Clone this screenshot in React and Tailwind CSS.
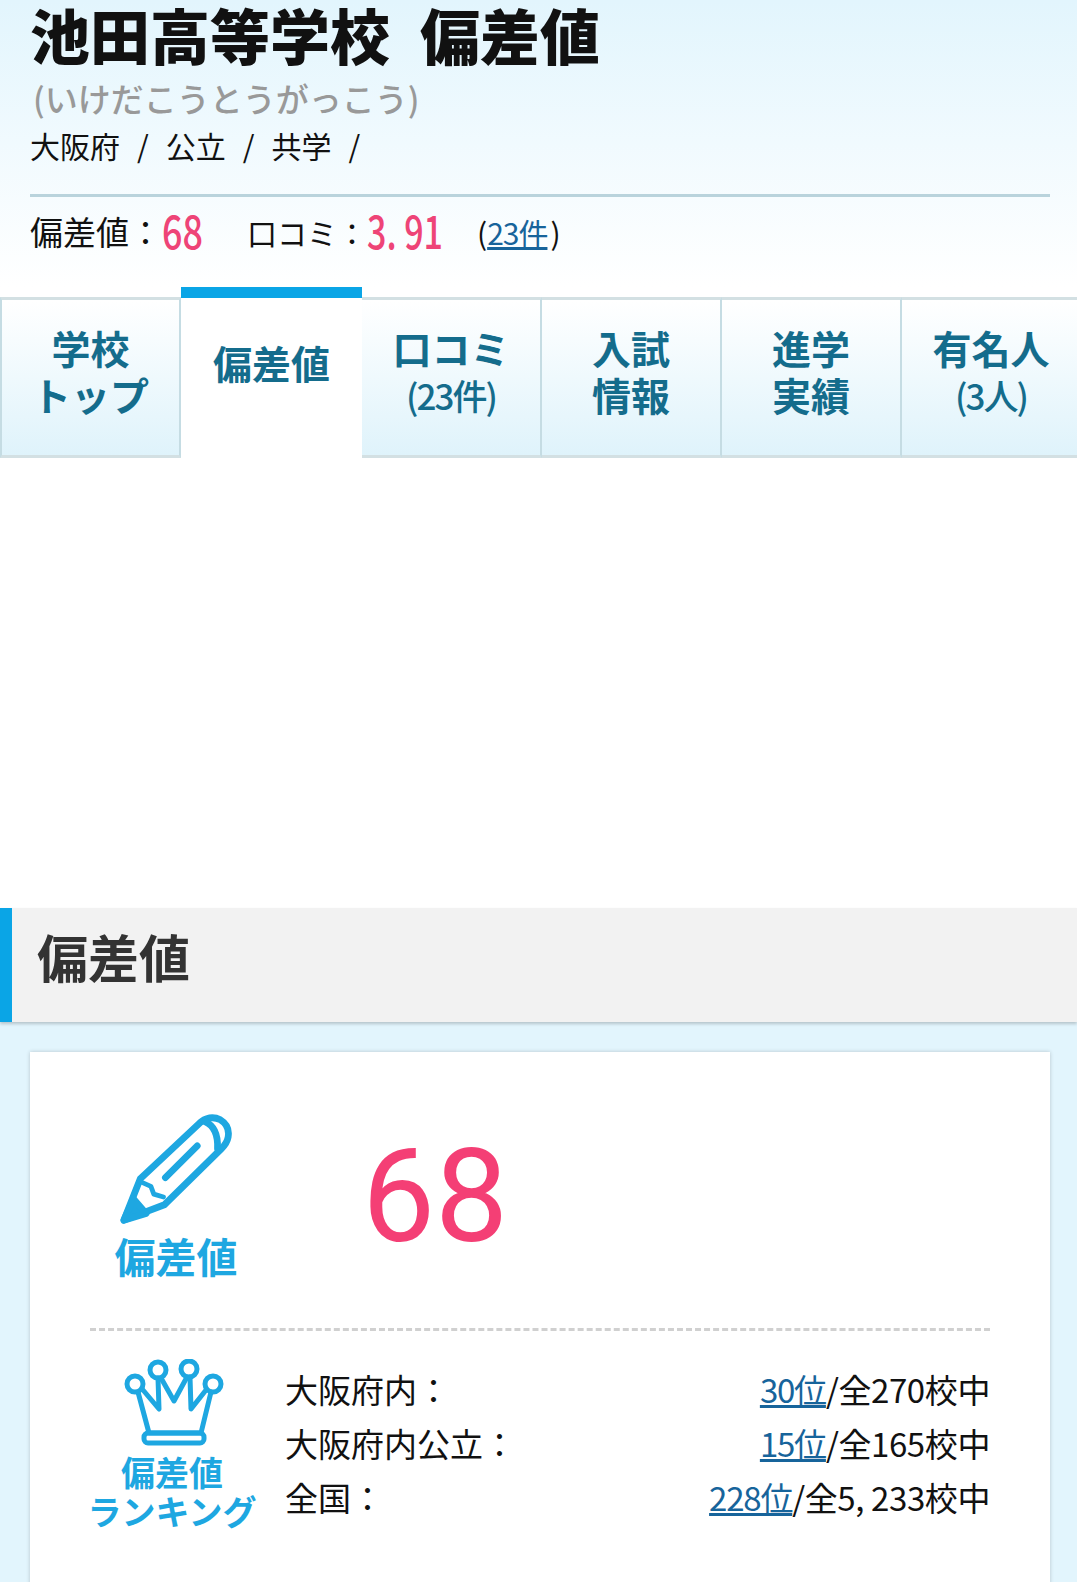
const TABS = [
  { lines: ["学校", "トップ"], w: "w-[181px] border-l-2 border-l-[#c5dce3]" },
  { lines: ["偏差値"], w: "w-[181px]", active: true },
  { lines: ["口コミ"], sub: "(23件)", w: "w-[180px]" },
  { lines: ["入試", "情報"], w: "w-[180px]" },
  { lines: ["進学", "実績"], w: "w-[180px]" },
  { lines: ["有名人"], sub: "(3人)", w: "w-[180px]" },
];

const RANKS = [
  { label: "大阪府内：", rank: "30位", total: "/全270校中" },
  { label: "大阪府内公立：", rank: "15位", total: "/全165校中" },
  { label: "全国：", rank: "228位", total: "/全5, 233校中" },
];

function Tab({ tab }) {
  if (tab.active) {
    return (
      <div className={`${tab.w} flex h-[171px] shrink-0 flex-col items-center border-t-[11px] border-[#0aa5e6] bg-white pt-[40px] text-[39px] leading-[48px] font-bold text-[#146c8c]`}>
        {tab.lines[0]}
      </div>
    );
  }
  return (
    <div className={`${tab.w} mt-[10px] flex h-[161px] shrink-0 flex-col items-center border-y-[3px] border-r-2 border-y-[#d3e0e3] border-r-[#c5dce3] bg-linear-to-b from-white to-[#dff3fb] pt-[24px] text-[39px] leading-[47px] font-bold text-[#146c8c]`}>
      {tab.lines.map((l) => (
        <div key={l}>{l}</div>
      ))}
      {tab.sub && <div className="text-[35px] font-medium tracking-[-2px]">{tab.sub}</div>}
    </div>
  );
}

function PencilIcon() {
  return (
    <svg width="112" height="112" viewBox="58 22 116 116" fill="none" stroke="#1ea7e1" strokeWidth="7" strokeLinejoin="round" strokeLinecap="round">
      <path d="M79 89 L142 30 Q152 23 162 28 Q172 34 170 46 Q169 52 163 58 L104 116 L62 132 Z" />
      <path d="M146 30 Q160 36 159 58" />
      <path d="M105 88 L138 55" />
      <path d="M79 92 L90 97 L93 105 L103 108" strokeWidth="5" />
      <path d="M62 132 L72 110 L85 125 Z" fill="#1ea7e1" />
    </svg>
  );
}

function CrownIcon() {
  return (
    <svg width="104" height="90" viewBox="64 20 104 90" fill="none" stroke="#1ea7e1" strokeWidth="5" strokeLinejoin="round" strokeLinecap="round">
      <circle cx="76" cy="45" r="8" />
      <circle cx="99" cy="31" r="8" />
      <circle cx="130" cy="30" r="8" />
      <circle cx="154" cy="45" r="8" />
      <path d="M79 53 L90 94 H142 L152 53" />
      <path d="M84 51 L100 70 L99 39" />
      <path d="M102 39 L115 62 L128 38" />
      <path d="M131 38 L132 70 L147 51" />
      <rect x="85" y="94" width="60" height="10" rx="4" />
    </svg>
  );
}

export default function App() {
  return (
    <div className="h-[1582px] w-[1077px] overflow-hidden bg-white font-['Noto_Sans_CJK_JP',sans-serif] text-[#111]">
      {/* School header */}
      <header className="h-[287px] bg-linear-to-b from-[#e2f5fd] to-white pr-[27px] pl-[30px]">
        <h1 className="flex h-[78px] gap-[30px] text-[60px] leading-[68px] font-black">
          <span>池田高等学校</span>
          <span>偏差値</span>
        </h1>
        <p className="ml-[3px] h-[44px] text-[33px] leading-[40px] font-medium text-[#999]">(いけだこうとうがっこう)</p>
        <p className="flex h-[52px] gap-[17px] text-[30px] leading-[46px]">
          <span>大阪府</span>
          <span>/</span>
          <span>公立</span>
          <span>/</span>
          <span>共学</span>
          <span>/</span>
        </p>
        <div className="mt-[20px] h-[3px] bg-[#b9d3dc]" />
        <div className="mt-[7px] flex h-[56px] items-center text-[33px]">
          <span>偏差値：</span>
          <span className="inline-block w-[41px] origin-left scale-x-[0.78] pb-[5px] text-[46px] font-medium text-[#ee4477]">68</span>
          <span className="ml-[44px] text-[30px]">口コミ：</span>
          <span className="inline-block w-[75px] origin-left scale-x-[0.74] pb-[5px] text-[46px] font-medium whitespace-nowrap text-[#ee4477]">3. 91</span>
          <span className="ml-[35px] text-[30px]">(</span>
          <a className="text-[30px] tracking-[-1px] text-[#17649b] underline">23件</a>
          <span className="ml-[3px] text-[30px]">)</span>
        </div>
      </header>

      {/* Tabs */}
      <nav className="flex h-[171px] items-start overflow-hidden">
        {TABS.map((t) => (
          <Tab key={t.lines[0]} tab={t} />
        ))}
      </nav>

      {/* Ad space */}
      <div className="h-[450px]" />

      <div className="h-[700px] bg-[#e2f5fd]">
        <h2 className="flex h-[114px] items-center border-l-[12px] border-[#0aa5e6] bg-[#f2f2f2] pb-[18px] pl-[25px] text-[51px] font-bold text-[#333] shadow-[0_2px_3px_rgba(0,0,0,0.2)]">
          偏差値
        </h2>

        <section className="mt-[30px] mr-[27px] ml-[30px] h-[600px] bg-white px-[60px] pt-[60px] shadow-[0_0_4px_rgba(0,0,0,0.2)]">
          <div className="flex h-[219px] border-b-[3px] border-dashed border-[#d0d0d0]">
            <div className="flex w-[172px] flex-col items-center">
              <div className="pt-[2px]">
                <PencilIcon />
              </div>
              <div className="mt-[4px] text-[41px] leading-[50px] font-bold text-[#1ea7e1]">偏差値</div>
            </div>
            <div className="mt-[10px] ml-[100px] font-['Roboto',sans-serif] text-[130px] leading-[150px] text-[#f43f75]">68</div>
          </div>

          <div className="mt-[28px] flex">
            <div className="flex w-[164px] flex-col items-center">
              <div className="pl-[6px]">
                <CrownIcon />
              </div>
              <div className="mt-[3px] text-[34px] leading-[40px] font-bold text-[#1ea7e1]">偏差値</div>
              <div className="text-[34px] leading-[38px] font-bold whitespace-nowrap text-[#1ea7e1]">ランキング</div>
            </div>
            <div className="ml-[31px] flex-1 pt-[3px] text-[33px] leading-[54px]">
              {RANKS.map((r) => (
                <div key={r.label} className="flex justify-between">
                  <span className="tracking-normal">{r.label}</span>
                  <span className="tracking-[-0.4px]">
                    <a className="tracking-[-1.2px] text-[#17649b] underline">{r.rank}</a>
                    {r.total}
                  </span>
                </div>
              ))}
            </div>
          </div>
        </section>
      </div>
    </div>
  );
}
